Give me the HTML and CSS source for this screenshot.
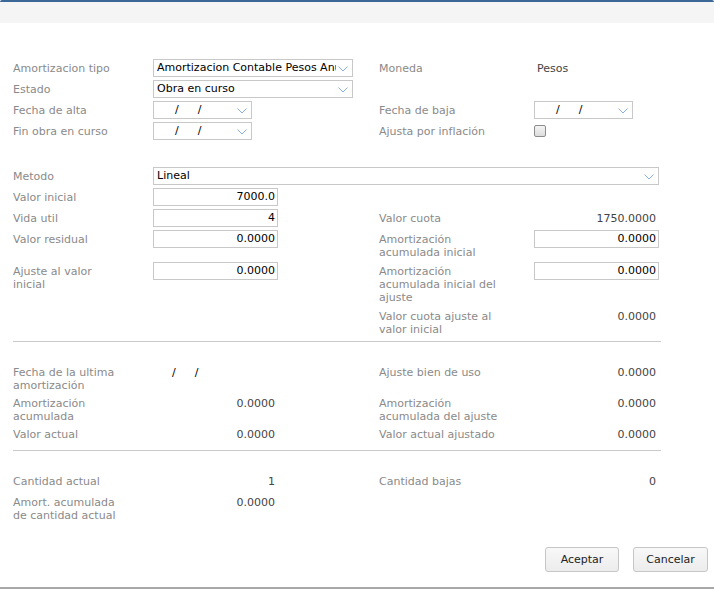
FILE: index.html
```
<!DOCTYPE html>
<html lang="es">
<head>
<meta charset="utf-8">
<title>Amortizacion</title>
<link rel="stylesheet" href="styles.css">
</head>
<body>
<div class="dialog">
  <div class="titlebar"></div>
  <div class="content">
    <div class="grid sec1">
      <div class="lbl">Amortizacion tipo</div>
      <div class="sel w200"><span class="seltext">Amortizacion Contable Pesos Anual</span><svg class="chev" width="10" height="6" viewBox="0 0 10 6"><path d="M0.5 0.5 L5 5 L9.5 0.5" fill="none" stroke="#86aee0" stroke-width="1"/></svg></div>
      <div class="lbl">Moneda</div>
      <div class="txt">Pesos</div>

      <div class="lbl">Estado</div>
      <div class="sel w200"><span class="seltext">Obra en curso</span><svg class="chev" width="10" height="6" viewBox="0 0 10 6"><path d="M0.5 0.5 L5 5 L9.5 0.5" fill="none" stroke="#86aee0" stroke-width="1"/></svg></div>
      <div></div>
      <div></div>

      <div class="lbl">Fecha de alta</div>
      <div class="sel date"><span class="slashes"><span>/</span><span>/</span></span><svg class="chev" width="10" height="6" viewBox="0 0 10 6"><path d="M0.5 0.5 L5 5 L9.5 0.5" fill="none" stroke="#86aee0" stroke-width="1"/></svg></div>
      <div class="lbl">Fecha de baja</div>
      <div class="sel date"><span class="slashes"><span>/</span><span>/</span></span><svg class="chev" width="10" height="6" viewBox="0 0 10 6"><path d="M0.5 0.5 L5 5 L9.5 0.5" fill="none" stroke="#86aee0" stroke-width="1"/></svg></div>

      <div class="lbl">Fin obra en curso</div>
      <div class="sel date"><span class="slashes"><span>/</span><span>/</span></span><svg class="chev" width="10" height="6" viewBox="0 0 10 6"><path d="M0.5 0.5 L5 5 L9.5 0.5" fill="none" stroke="#86aee0" stroke-width="1"/></svg></div>
      <div class="lbl">Ajusta por inflación</div>
      <div class="chkcell"><span class="chk"></span></div>
    </div>

    <div class="grid sec2">
      <div class="lbl">Metodo</div>
      <div class="sel span3"><span class="seltext">Lineal</span><svg class="chev" width="10" height="6" viewBox="0 0 10 6"><path d="M0.5 0.5 L5 5 L9.5 0.5" fill="none" stroke="#86aee0" stroke-width="1"/></svg></div>

      <div class="lbl">Valor inicial</div>
      <div class="inp">7000.0</div>
      <div></div>
      <div></div>

      <div class="lbl">Vida util</div>
      <div class="inp">4</div>
      <div class="lbl">Valor cuota</div>
      <div class="val">1750.0000</div>

      <div class="lbl">Valor residual</div>
      <div class="inp">0.0000</div>
      <div class="lbl">Amortización<br>acumulada inicial</div>
      <div class="inp">0.0000</div>

      <div class="lbl">Ajuste al valor<br>inicial</div>
      <div class="inp">0.0000</div>
      <div class="lbl">Amortización<br>acumulada inicial del<br>ajuste</div>
      <div class="inp">0.0000</div>

      <div></div>
      <div></div>
      <div class="lbl">Valor cuota ajuste al<br>valor inicial</div>
      <div class="val">0.0000</div>
    </div>

    <div class="rule r1"></div>

    <div class="grid sec3">
      <div class="lbl">Fecha de la ultima<br>amortización</div>
      <div class="txt dateval"><span class="slashes"><span>/</span><span>/</span></span></div>
      <div class="lbl">Ajuste bien de uso</div>
      <div class="val">0.0000</div>

      <div class="lbl">Amortización<br>acumulada</div>
      <div class="val">0.0000</div>
      <div class="lbl">Amortización<br>acumulada del ajuste</div>
      <div class="val">0.0000</div>

      <div class="lbl">Valor actual</div>
      <div class="val">0.0000</div>
      <div class="lbl">Valor actual ajustado</div>
      <div class="val">0.0000</div>
    </div>

    <div class="rule r2"></div>

    <div class="grid sec4">
      <div class="lbl">Cantidad actual</div>
      <div class="val">1</div>
      <div class="lbl">Cantidad bajas</div>
      <div class="val">0</div>

      <div class="lbl">Amort. acumulada<br>de cantidad actual</div>
      <div class="val">0.0000</div>
      <div></div>
      <div></div>
    </div>
  </div>
  <div class="footer">
    <button class="btn b1">Aceptar</button>
    <button class="btn b2">Cancelar</button>
  </div>
</div>
</body>
</html>
```
FILE: styles.css
```
* { box-sizing: border-box; }
html, body { margin: 0; padding: 0; background: #fff; }
body {
  font-family: "DejaVu Sans", Verdana, sans-serif;
  font-size: 11px;
  color: #333;
}
.dialog {
  width: 714px;
  height: 589px;
  border-bottom: 2px solid #a8a8a8;
  display: flex;
  flex-direction: column;
  overflow: hidden;
}
.titlebar {
  height: 23px;
  border-top: 2px solid #3b6897;
  border-radius: 2px 2px 0 0;
  background: #f5f5f5;
  flex: none;
}
.content {
  padding: 36px 0 0 13px;
  flex: 1;
}
.grid {
  display: grid;
  grid-template-columns: 140px 226px 155px 125px;
  row-gap: 3px;
  align-items: start;
}
.lbl {
  color: #8a8a8a;
  line-height: 13px;
  padding-top: 3px;
  min-height: 18px;
}
.txt {
  color: #444;
  line-height: 13px;
  padding: 3px 0 0 3px;
  min-height: 18px;
}
.val {
  width: 124px;
  text-align: right;
  color: #444;
  line-height: 13px;
  padding: 3px 2px 0 0;
  min-height: 18px;
}
.sel {
  position: relative;
  height: 18px;
  border: 1px solid #c8c8c8;
  background: #fff;
  color: #000;
  line-height: 16px;
  padding: 0 16px 0 3px;
  white-space: nowrap;
  overflow: hidden;
}
.seltext { display: block; overflow: hidden; }
.w200 { width: 200px; }
.date { width: 99px; }
.span3 { grid-column: 2 / span 3; width: 506px; }
.chev {
  position: absolute;
  right: 4px;
  top: 6px;
}
.slashes {
  display: flex;
  gap: 19px;
  padding-left: 18px;
  color: #000;
}
.dateval { padding-left: 0; }
.dateval .slashes { padding-left: 19px; }
.inp {
  width: 125px;
  height: 18px;
  border: 1px solid #c8c8c8;
  background: #fff;
  color: #000;
  text-align: right;
  line-height: 16px;
  padding: 0 2px 0 3px;
}
.chkcell { padding-top: 3px; min-height: 18px; }
.chk {
  display: block;
  width: 12px;
  height: 12px;
  border: 1px solid #8c8c8c;
  border-radius: 2px;
  background: linear-gradient(#f4f4f4, #dcdcdc);
}
.sec2 { margin-top: 27px; }
.rule {
  width: 648px;
  height: 1px;
  background: #cacaca;
}
.r1 { margin-top: 5px; }
.sec3 { margin-top: 21px; row-gap: 2px; }
.r2 { margin-top: 7px; }
.sec4 { margin-top: 21px; }
.footer {
  display: flex;
  justify-content: flex-end;
  gap: 14px;
  padding: 0 6px 15px 0;
}
.btn {
  height: 25px;
  border: 1px solid #c6c6c6;
  border-radius: 3px;
  background: linear-gradient(#f8f8f8, #ececec);
  font-family: "DejaVu Sans", Verdana, sans-serif;
  font-size: 11px;
  color: #222;
  padding: 0;
}
.b1 { width: 74px; }
.b2 { width: 75px; }
```
